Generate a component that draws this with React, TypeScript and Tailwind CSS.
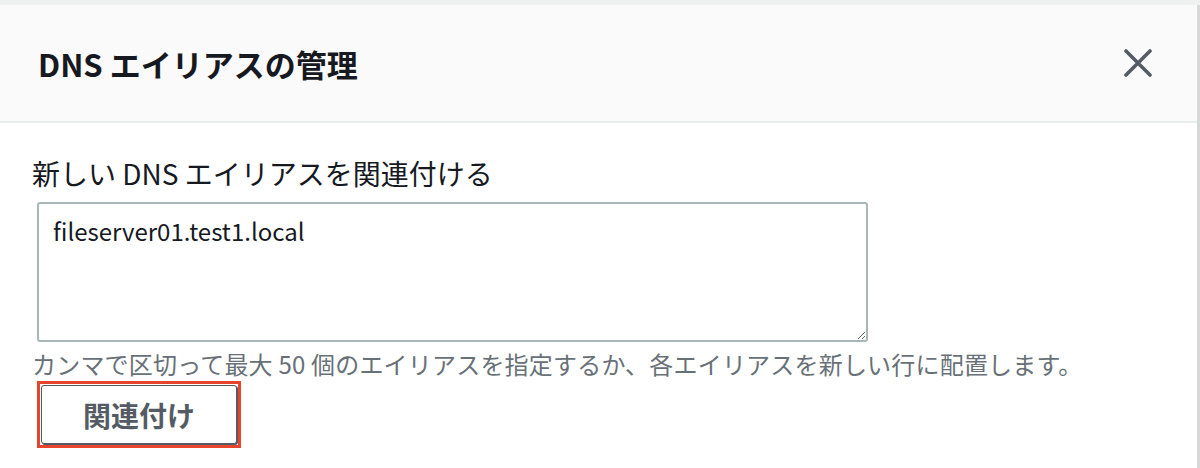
export default function App() {
  return (
    <div
      className="w-[1200px] h-[468px] bg-white overflow-hidden flex flex-col"
      style={{ fontFamily: '"Noto Sans CJK JP", "Noto Sans", sans-serif' }}
    >
      <div className="h-[5px] bg-[#eff0f0] shrink-0" />
      <div className="flex-1 flex flex-col border-r-[3px] border-[#d5d9d9]">
        <div className="h-[118px] shrink-0 bg-[#fafafa] border-b-2 border-[#eaeded] flex items-center justify-between pl-[38px] pr-[45px]">
          <h2 className="text-[31px] font-bold text-[#16191f] leading-none">DNS エイリアスの管理</h2>
          <button className="text-[#545b64]" title="閉じる">
            <svg width="28" height="28" viewBox="0 0 28 28" fill="none" stroke="currentColor" strokeWidth="3.6" strokeLinecap="round">
              <path d="M2 2L26 26M26 2L2 26" />
            </svg>
          </button>
        </div>

        <div className="pl-[32px] pt-[30px]">
          <label className="block text-[28px] text-[#16191f] leading-[40px]">
            新しい DNS エイリアスを関連付ける
          </label>
          <textarea
            className="block mt-[9px] ml-[5px] w-[831px] h-[140px] border-2 border-[#aab7b8] rounded-[3px] px-[14px] py-[9px] text-[24px] text-[#16191f] leading-[36px] outline-none resize-y"
            defaultValue="fileserver01.test1.local"
          />
          <p className="mt-[6px] text-[24px] tracking-[0.2px] text-[#687078] leading-[32px]">
            カンマで区切って最大 50 個のエイリアスを指定するか、各エイリアスを新しい行に配置します。
          </p>
          <div className="mt-[1px] ml-[5px] w-[204px] h-[67px] border-[3px] border-[#e8432b] p-[1px]">
            <button className="w-full h-full bg-white border border-[#545b64] rounded-[3px] shadow-[1px_1px_0_#545b64] text-[28px] font-bold text-[#545b64] leading-none">
              関連付け
            </button>
          </div>
        </div>
      </div>
    </div>
  );
}
